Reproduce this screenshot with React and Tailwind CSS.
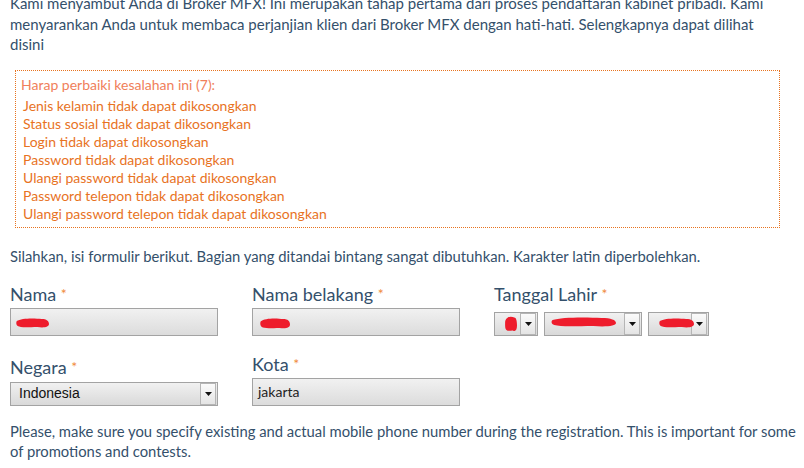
const ERRORS = [
  "Jenis kelamin tidak dapat dikosongkan",
  "Status sosial tidak dapat dikosongkan",
  "Login tidak dapat dikosongkan",
  "Password tidak dapat dikosongkan",
  "Ulangi password tidak dapat dikosongkan",
  "Password telepon tidak dapat dikosongkan",
  "Ulangi password telepon tidak dapat dikosongkan",
];

function Label({ children }) {
  return (
    <div className="text-[18px] leading-[22px] text-[#34506b]">
      {children} <span className="text-[14px] align-top text-[#f08a3c]">*</span>
    </div>
  );
}

function Scribble({ className }) {
  return (
    <svg className={"absolute " + className} viewBox="0 0 40 10" preserveAspectRatio="none">
      <path d="M1 3 C6 0 22 0 31 1 C37 1 40 3 40 6 C40 9 34 10 26 9 C16 9 6 10 2 8 C0 7 0 4 1 3 Z" fill="#ee1c2c" />
    </svg>
  );
}

function Input({ value, width = "w-[208px]", children }) {
  return (
    <div
      className={`relative h-[28px] ${width} border border-[#a3a3a3] bg-gradient-to-b from-[#f1f1f1] to-[#dcdcdc] px-[5px] text-[14px] leading-[26px] text-[#222]`}
    >
      {value}
      {children}
    </div>
  );
}

function Arrow() {
  return (
    <div className="flex h-[22px] w-[16px] shrink-0 items-center justify-center border border-[#b5b5b5] bg-gradient-to-b from-[#fbfbfb] to-[#e4e4e4]">
      <svg width="7" height="4" viewBox="0 0 7 4">
        <path d="M0 0 H7 L3.5 4 Z" fill="#111" />
      </svg>
    </div>
  );
}

function Select({ value, className, children }) {
  return (
    <div
      className={`relative flex h-[24px] items-center border border-[#a3a3a3] bg-gradient-to-b from-[#f1f1f1] to-[#d9d9d9] pr-px ${className}`}
    >
      <div className="flex-1 pl-[8px] text-[14px] text-[#111]" style={{ fontFamily: '"Liberation Sans", Arial, sans-serif' }}>
        {value}
      </div>
      <Arrow />
      {children}
    </div>
  );
}

export default function App() {
  return (
    <div
      className="h-[468px] w-[804px] overflow-hidden bg-white pl-[10px] pr-[8px] text-[#34506b]"
      style={{ fontFamily: 'Lato, "Open Sans", sans-serif' }}
    >
      <p className="mt-[-7px] whitespace-nowrap text-[15px] leading-[20.5px]">
        Kami menyambut Anda di Broker MFX! Ini merupakan tahap pertama dari proses pendaftaran kabinet pribadi. Kami
        <br />
        menyarankan Anda untuk membaca perjanjian klien dari Broker MFX dengan hati-hati. Selengkapnya dapat dilihat
        <br />
        disini
      </p>

      <div className="mt-[15px] ml-[5px] w-[765px] border border-dotted border-[#e8731f] pl-[5px] pt-[5px] pb-[4px]">
        <div className="mb-[3px] text-[14px] leading-[18px] text-[#f0805a]">Harap perbaiki kesalahan ini (7):</div>
        {ERRORS.map((e) => (
          <div key={e} className="ml-[2px] text-[14px] leading-[18px] text-[#e8731f]">
            {e}
          </div>
        ))}
      </div>

      <p className="mt-[18px] text-[14.8px] leading-[20px]">
        Silahkan, isi formulir berikut. Bagian yang ditandai bintang sangat dibutuhkan. Karakter latin diperbolehkan.
      </p>

      <div className="mt-[17px] grid grid-cols-[242px_242px_242px] items-end">
        <div className="flex flex-col gap-[3px]">
          <Label>Nama</Label>
          <Input>
            <Scribble className="left-[5px] top-[9px] h-[10px] w-[33px]" />
          </Input>
        </div>
        <div className="flex flex-col gap-[3px]">
          <Label>Nama belakang</Label>
          <Input>
            <Scribble className="left-[7px] top-[9px] h-[11px] w-[30px]" />
          </Input>
        </div>
        <div className="flex flex-col gap-[7px]">
          <Label>Tanggal Lahir</Label>
          <div className="flex gap-[6px]">
            <Select className="w-[44px]">
              <Scribble className="left-[10px] top-[3px] h-[16px] w-[12px]" />
            </Select>
            <Select className="w-[98px]">
              <Scribble className="left-[6px] top-[4px] h-[10px] w-[65px]" />
            </Select>
            <Select className="w-[61px]">
              <Scribble className="left-[10px] top-[5px] h-[10px] w-[35px]" />
            </Select>
          </div>
        </div>
      </div>

      <div className="mt-[17px] grid grid-cols-[242px_242px] items-end">
        <div className="flex flex-col gap-[4px]">
          <Label>Negara</Label>
          <Select value="Indonesia" className="w-[208px]" />
        </div>
        <div className="flex flex-col gap-[3px]">
          <Label>Kota</Label>
          <Input value="jakarta" />
        </div>
      </div>

      <p className="mt-[15px] whitespace-nowrap text-[14.8px] leading-[20px]">
        Please, make sure you specify existing and actual mobile phone number during the registration. This is important for some
        <br />
        of promotions and contests.
      </p>
    </div>
  );
}
